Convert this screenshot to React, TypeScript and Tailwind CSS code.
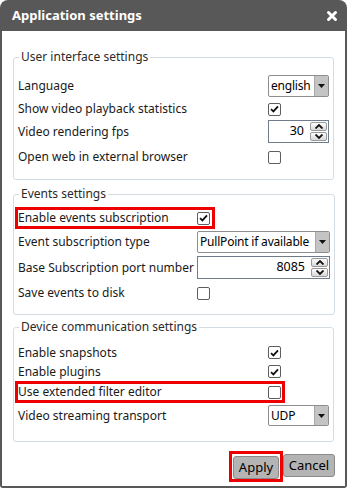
import type { ReactNode } from "react";

const FONT = { fontFamily: '"Noto Sans", "Open Sans", Arial, sans-serif' };

const Check = ({ checked }: { checked?: boolean }) => (
  <div className="w-[13px] h-[13px] border border-[#5e5e5e] rounded-[2px] bg-white flex items-center justify-center">
    {checked && (
      <svg width="9" height="8" viewBox="0 0 9 8">
        <path d="M1 4.2 L3.4 6.4 L8 1.4" fill="none" stroke="#111" strokeWidth="1.8" />
      </svg>
    )}
  </div>
);

const Select = ({ value, w, h }: { value: string; w: string; h: string }) => (
  <div className={`${w} ${h} flex border border-[#8e8e8e] rounded-[2px] bg-white overflow-hidden`}>
    <div className="flex-1 pl-[2px] flex items-center text-[12px] tracking-[-0.2px] text-black whitespace-nowrap overflow-hidden">
      {value}
    </div>
    <div className="w-[14px] bg-[#c4c4c4] border-l border-[#a8a8a8] flex items-center justify-center">
      <svg width="7" height="4" viewBox="0 0 7 4">
        <path d="M0 0 H7 L3.5 4 Z" fill="#111" />
      </svg>
    </div>
  </div>
);

const Arrow = ({ up }: { up?: boolean }) => (
  <div className="w-[17px] h-[9px] border border-[#9a9a9a] rounded-[2px] bg-gradient-to-b from-[#fdfdfd] to-[#d8d8d8] flex items-center justify-center">
    <svg width="8" height="5" viewBox="0 0 8 5">
      <path d={up ? "M0.5 4.5 L4 1 L7.5 4.5" : "M0.5 0.5 L4 4 L7.5 0.5"} fill="none" stroke="#111" strokeWidth="1.8" />
    </svg>
  </div>
);

const Spinner = ({ value, w }: { value: string; w: string }) => (
  <div className={`${w} h-[23px] flex items-center border border-[#6f7d8a] bg-white`}>
    <div className="flex-1 text-right pr-[6px] text-[12.5px] text-black">{value}</div>
    <div className="flex flex-col gap-[1px] pr-[1px]">
      <Arrow up />
      <Arrow />
    </div>
  </div>
);

const Row = ({
  label,
  children,
  h,
  mt = "",
  ctl,
  red,
}: {
  label: string;
  children: ReactNode;
  h: string;
  mt?: string;
  ctl: string;
  red?: string;
}) => (
  <div
    className={`flex items-center ${h} ${mt} ${
      red ? `${red} border-[3px] border-[#ee0000] -ml-[3px] pl-0` : ""
    }`}
  >
    <div className={`${ctl} text-[12px] text-[#1a1a1a] whitespace-nowrap`}>{label}</div>
    {children}
  </div>
);

const Group = ({ title, children, mt, pb }: { title: string; children: ReactNode; mt: string; pb: string }) => (
  <fieldset className={`${mt} ${pb} border border-[#d3dce3] rounded-[3px] px-[4px]`}>
    <legend className="ml-[1px] px-[2px] text-[12px] leading-[16px] text-[#2a2a2a]">{title}</legend>
    {children}
  </fieldset>
);

export default function App() {
  return (
    <div className="w-[347px] h-[488px] bg-white" style={FONT}>
      <div className="h-full flex flex-col rounded-t-[8px] rounded-b-[3px] overflow-hidden bg-[#585858]">
        {/* title bar */}
        <div className="h-[31px] flex items-center justify-between pl-[12px] pr-[9px]">
          <span className="text-white font-bold text-[13px]">Application settings</span>
          <svg width="12" height="12" viewBox="0 0 12 12">
            <path d="M2.5 2.5 L9.5 9.5 M9.5 2.5 L2.5 9.5" stroke="#fff" strokeWidth="3" strokeLinecap="round" />
          </svg>
        </div>

        {/* body */}
        <div className="flex-1 mx-[2px] mb-[2px] bg-white pl-[11px] pr-[12px] flex flex-col">
          <Group title="User interface settings" mt="mt-[18px]" pb="pb-[11px]">
            <Row label="Language" h="h-[22px]" mt="mt-[10px]" ctl="w-[250px]">
              <Select value="english" w="w-[61px]" h="h-[22px]" />
            </Row>
            <Row label="Show video playback statistics" h="h-[22px]" mt="mt-[1px]" ctl="w-[250px]">
              <Check checked />
            </Row>
            <Row label="Video rendering fps" h="h-[23px]" ctl="w-[250px]">
              <Spinner value="30" w="w-[61px]" />
            </Row>
            <Row label="Open web in external browser" h="h-[22px]" mt="mt-[3px]" ctl="w-[250px]">
              <Check />
            </Row>
          </Group>

          <Group title="Events settings" mt="mt-[6px]" pb="pb-[10px]">
            <Row label="Enable events subscription" h="h-[22px]" mt="mt-[5px]" ctl="w-[179px]" red="w-[200px]">
              <Check checked />
            </Row>
            <Row label="Event subscription type" h="h-[22px]" mt="mt-[2px]" ctl="w-[179px]">
              <Select value="PullPoint if available" w="w-[133px]" h="h-[22px]" />
            </Row>
            <Row label="Base Subscription port number" h="h-[23px]" mt="mt-[3px]" ctl="w-[179px]">
              <Spinner value="8085" w="w-[133px]" />
            </Row>
            <Row label="Save events to disk" h="h-[22px]" mt="mt-[3px]" ctl="w-[179px]">
              <Check />
            </Row>
          </Group>

          <Group title="Device communication settings" mt="mt-[4px]" pb="pb-[15px]">
            <Row label="Enable snapshots" h="h-[19px]" mt="mt-[8px]" ctl="w-[250px]">
              <Check checked />
            </Row>
            <Row label="Enable plugins" h="h-[19px]" ctl="w-[250px]">
              <Check checked />
            </Row>
            <Row label="Use extended filter editor" h="h-[22px]" ctl="w-[250px]" red="w-[270px]">
              <Check />
            </Row>
            <Row label="Video streaming transport" h="h-[21px]" mt="mt-[2px]" ctl="w-[250px]">
              <Select value="UDP" w="w-[61px]" h="h-[21px]" />
            </Row>
          </Group>

          <div className="mt-[9px] flex justify-end -mr-[2px]">
            <div className="border-[3px] border-[#ee0000] px-[1px]">
              <button className="h-[23px] w-[46px] bg-[#b4b4b4] border border-[#8a8a8a] rounded-[3px] text-[13px] text-black">
                Apply
              </button>
            </div>
            <button className="mt-[3px] h-[23px] w-[52px] bg-[#b4b4b4] border border-[#8a8a8a] rounded-[3px] text-[13px] text-black">
              Cancel
            </button>
          </div>
        </div>
      </div>
    </div>
  );
}
